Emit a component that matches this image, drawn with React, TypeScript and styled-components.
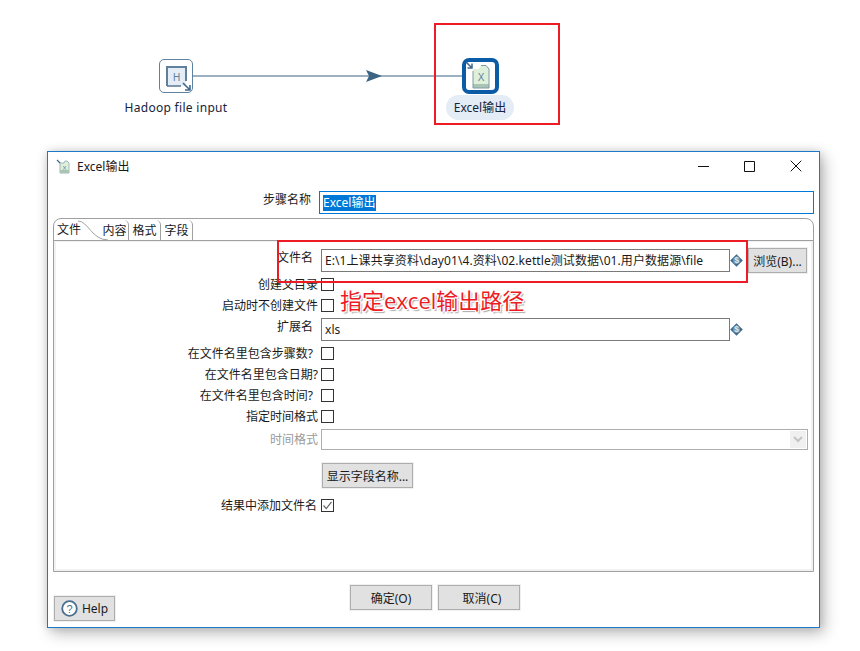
import React from "react";
import styled, { createGlobalStyle } from "styled-components";

const Global = createGlobalStyle`
  html, body { margin: 0; padding: 0; background: #fff; }
  body { font-family: "Noto Sans", "Noto Sans CJK SC", sans-serif; font-size: 12px; color: #1a1a1a; }
`;
const Page = styled.div`
  position: relative; width: 860px; height: 651px; overflow: hidden; background: #fff;
`;
const Canvas = styled.div`
  position: relative; height: 151px;
`;
const Wire = styled.svg`
  position: absolute; left: 190px; top: 66px;
`;
const NodeBox = styled.div<{ $active?: boolean }>`
  position: absolute; box-sizing: border-box; background: #fff; display: flex; align-items: center; justify-content: center;
  left: ${p => (p.$active ? 462 : 159)}px; top: ${p => (p.$active ? 58 : 59)}px;
  width: ${p => (p.$active ? 37 : 34)}px; height: ${p => (p.$active ? 36 : 34)}px;
  border: ${p => (p.$active ? "4px solid #0b5ca6" : "1px solid #5f81a0")};
  border-radius: ${p => (p.$active ? 7 : 5)}px;
`;
const NodeLabel = styled.div<{ $active?: boolean }>`
  position: absolute; color: #14233a; white-space: nowrap; text-align: center; box-sizing: border-box;
  font-size: 12px; line-height: 25px; height: 25px;
  left: ${p => (p.$active ? 446 : 116)}px; top: 95px;
  width: ${p => (p.$active ? 68 : 120)}px;
  letter-spacing: ${p => (p.$active ? 0 : 0.3)}px;
  background: ${p => (p.$active ? "#e4ecf5" : "transparent")};
  border-radius: 13px;
`;
const RedBox = styled.div<{ $x: number; $y: number; $w: number; $h: number }>`
  position: absolute; box-sizing: border-box; border: 2px solid #ed1c24; z-index: 5; pointer-events: none;
  left: ${p => p.$x}px; top: ${p => p.$y}px; width: ${p => p.$w}px; height: ${p => p.$h}px;
`;
const Note = styled.div`
  position: absolute; left: 340px; top: 284px; z-index: 5; color: #ed1c24; white-space: nowrap;
  font-family: "Open Sans", "Noto Sans CJK SC", sans-serif;
  font-size: 22px; line-height: 32px;
  text-shadow: 1px 1px 0 #fff, -1px -1px 0 #fff, 1px -1px 0 #fff, -1px 1px 0 #fff, 2px 2px 1px #a8a8a8;
`;
const Win = styled.div`
  margin-left: 47px; width: 773px; height: 477px; box-sizing: border-box; background: #fff;
  border: 1px solid #1c78c8; box-shadow: 4px 5px 14px rgba(0,0,0,.28), 0 0 8px rgba(0,0,0,.12);
  display: flex; flex-direction: column; padding: 0 5px;
`;
const TitleBar = styled.div`
  height: 28px; display: flex; align-items: center; margin-left: 3px; flex: none;
`;
const TitleText = styled.span`
  margin-left: 7px; font-size: 12px; color: #1a1a1a;
`;
const Controls = styled.div`
  margin-left: auto; display: flex; gap: 35px; margin-right: 12px; align-items: center;
`;
const NameRow = styled.div`
  height: 23px; margin-top: 11px; display: flex; flex: none;
`;
const NameLabel = styled.label`
  width: 258px; text-align: right; line-height: 18px; flex: none;
`;
const NameInput = styled.div`
  margin-left: 8px; flex: 1; box-sizing: border-box; border: 1px solid #0078d7; padding: 3px 0 0 3px; height: 23px;
`;
const Selected = styled.span`
  display: block; width: 53px; height: 16px; line-height: 16px; background: #0078d7; color: #fff; white-space: nowrap;
`;
const Folder = styled.div`
  margin-top: 4px; height: 354px; box-sizing: border-box; flex: none; border: 1px solid #a0a0a0; border-radius: 8px 8px 0 0;
  display: flex; flex-direction: column;
`;
const TabStrip = styled.div`
  position: relative; height: 21px; flex: none; display: flex; border-bottom: 1px solid #a0a0a0;
`;
const ActiveTab = styled.div`
  width: 47px; padding-left: 3px; line-height: 21px; box-sizing: border-box; flex: none;
`;
const Tab = styled.div<{ $w: number }>`
  width: ${p => p.$w}px; box-sizing: border-box; text-align: center; line-height: 21px; flex: none;
  border-right: 1px solid #a0a0a0; border-top-right-radius: 5px; margin-top: 1px; height: 20px;
`;
const Curve = styled.svg`
  position: absolute; left: 24px; top: 0;
`;
const Panel = styled.div`
  flex: 1; display: flex; flex-direction: column; border: 2px solid #f1f1f1; border-top-width: 1px;
`;
const Row = styled.div<{ $h: number; $mt: number }>`
  display: flex; align-items: center; height: ${p => p.$h}px; margin-top: ${p => p.$mt}px; flex: none;
`;
const LabelCell = styled.div`
  width: 262px; flex: none; display: flex; justify-content: flex-end;
`;
const Label = styled.label<{ $end?: number; $up?: number; $off?: boolean }>`
  white-space: nowrap; line-height: 16px;
  margin-right: ${p => p.$end ?? 0}px;
  transform: translateY(${p => -(p.$up ?? 0)}px);
  color: ${p => (p.$off ? "#9a9a9a" : "#1a1a1a")};
`;
const Field = styled.div`
  margin-left: 3px; width: 409px; height: 23px; box-sizing: border-box; border: 1px solid #7a7a7a; padding-left: 3px; line-height: 21px; letter-spacing: 0.08px; white-space: nowrap; overflow: hidden; flex: none; color: #1a1a1a;
`;
const VarIcon = styled.svg`
  flex: none;
`;
const Check = styled.span`
  margin-left: 3px; width: 13px; height: 13px; box-sizing: border-box; border: 1px solid #333; flex: none; display: flex; align-items: center; justify-content: center;
`;
const Combo = styled.div`
  margin-left: 3px; width: 487px; height: 21px; box-sizing: border-box; border: 1px solid #adadad; display: flex; justify-content: flex-end; padding: 1px; flex: none;
`;
const ComboBtn = styled.div`
  width: 16px; background: #f0f0f0; display: flex; align-items: center; justify-content: center;
`;
const Btn = styled.button<{ $w: number; $pl?: number; $ml?: number }>`
  width: ${p => p.$w}px; height: 25px; box-sizing: border-box; background: #e1e1e1; border: 1px solid #adadad; outline: 1px solid #f0f0f0;
  font: inherit; font-size: 12px; color: #1a1a1a; padding: 0 0 0 ${p => p.$pl ?? 0}px; margin-left: ${p => p.$ml ?? 0}px;
  flex: none; display: flex; align-items: center; justify-content: center; gap: 4px; white-space: nowrap;
`;
const Footer = styled.div`
  flex: 1; display: flex; align-items: flex-start;
`;
const HelpSlot = styled.div`
  margin-top: 24px; margin-left: 1px;
`;
const FooterCenter = styled.div`
  display: flex; gap: 6px; margin-left: 235px; margin-top: 13px;
`;

const Var = () => (
  <VarIcon width="13" height="13" viewBox="0 0 13 13">
    <path d="M6.5 0.2 12.8 6.5 6.5 12.8 0.2 6.5Z" fill="#3f6a8c" />
    <circle cx="6.5" cy="6.5" r="3.6" fill="#6f93ad" />
    <text x="6.5" y="9.4" fontSize="8.5" textAnchor="middle" fill="#dfe8ef" fontFamily="Liberation Sans, sans-serif" fontWeight="700">$</text>
  </VarIcon>
);
const CheckRow = ({ text, end, mt, checked }: { text: string; end?: number; mt: number; checked?: boolean }) => (
  <Row $h={13} $mt={mt}>
    <LabelCell><Label $end={end}>{text}</Label></LabelCell>
    <Check>
      {checked && (
        <svg width="11" height="11" viewBox="0 0 11 11"><path d="M1.5 5.5 4.3 8.6 9.5 1.8" fill="none" stroke="#666" strokeWidth="1.2" /></svg>
      )}
    </Check>
  </Row>
);

export default function App() {
  return (
    <Page>
      <Global />
      <Canvas>
        <Wire width="275" height="20" viewBox="0 0 275 20">
          <path d="M2 10H273" stroke="#3b6485" strokeWidth="1.2" />
          <path d="M176 4 192 10 176 16 179 10Z" fill="#3b6485" />
        </Wire>
        <NodeBox>
          <svg width="30" height="30" viewBox="0 0 30 30">
            <path d="M6 6H25V25H6Z" fill="#e4edf5" />
            <path d="M6 25V6H25V20" fill="none" stroke="#5f7f9b" strokeWidth="2" />
            <path d="M6 25H20" stroke="#5f7f9b" strokeWidth="1.6" />
            <text x="15.5" y="19.5" fontSize="10" textAnchor="middle" fill="#5f7f9b" fontFamily="Liberation Sans, sans-serif">H</text>
            <path d="M22 22 29 29M29 24V29H24" fill="none" stroke="#3f6a8c" strokeWidth="1.6" />
          </svg>
        </NodeBox>
        <NodeLabel>Hadoop file input</NodeLabel>
        <NodeBox $active>
          <svg width="29" height="28" viewBox="0 0 29 28">
            <path d="M7 7H13L15 3H20L23 7V26H7Z" fill="#dff0da" />
            <path d="M7 22H23V26H7Z" fill="#a9c4b4" />
            <path d="M7 9V26H23V7L20 3.5H15" fill="none" stroke="#7d9aa8" strokeWidth="1" />
            <text x="15" y="19" fontSize="10" textAnchor="middle" fill="#5f7f9b" fontFamily="Liberation Sans, sans-serif">X</text>
            <path d="M0 0 6 6M6 1.5V6H1.5" fill="none" stroke="#3f6a8c" strokeWidth="1.5" />
          </svg>
        </NodeBox>
        <NodeLabel $active>Excel输出</NodeLabel>
      </Canvas>
      <RedBox $x={434} $y={23} $w={126} $h={102} />
      <RedBox $x={277} $y={240} $w={471} $h={43} />
      <Note>指定excel输出路径</Note>
      <Win>
        <TitleBar>
          <svg width="14" height="15" viewBox="0 0 14 15">
            <path d="M4 4H8L9 2H11L13 4V14H4Z" fill="#dff0da" stroke="#8aa5ae" strokeWidth="0.8" />
            <path d="M4 11H13V14H4Z" fill="#a9c4b4" />
            <text x="8.5" y="10.5" fontSize="6" textAnchor="middle" fill="#5f7f9b" fontFamily="Liberation Sans, sans-serif">X</text>
            <path d="M1 1 4 4" stroke="#3f6a8c" strokeWidth="1.2" />
          </svg>
          <TitleText>Excel输出</TitleText>
          <Controls>
            <svg width="11" height="11" viewBox="0 0 11 11"><path d="M0 5.5H11" stroke="#111" strokeWidth="1" /></svg>
            <svg width="11" height="11" viewBox="0 0 11 11"><path d="M.5.5H10.5V10.5H.5Z" fill="none" stroke="#111" strokeWidth="1" /></svg>
            <svg width="12" height="12" viewBox="0 0 12 12"><path d="M.7.7 11.3 11.3M11.3.7.7 11.3" stroke="#111" strokeWidth="1" /></svg>
          </Controls>
        </TitleBar>
        <NameRow>
          <NameLabel>步骤名称</NameLabel>
          <NameInput><Selected>Excel输出</Selected></NameInput>
        </NameRow>
        <Folder>
          <TabStrip>
            <ActiveTab>文件</ActiveTab>
            <Tab $w={28}>内容</Tab>
            <Tab $w={32}>格式</Tab>
            <Tab $w={32}>字段</Tab>
            <Curve width="30" height="22" viewBox="0 0 30 22">
              <path d="M0 2C10 2 14 21 30 21" fill="none" stroke="#a0a0a0" strokeWidth="1" />
            </Curve>
          </TabStrip>
          <Panel>
            <Row $h={23} $mt={7}>
              <LabelCell><Label $end={5} $up={3}>文件名</Label></LabelCell>
              <Field>E:\1上课共享资料\day01\4.资料\02.kettle测试数据\01.用户数据源\file</Field>
              <Var />
              <Btn $w={59} $ml={5}>浏览(B)...</Btn>
            </Row>
            <CheckRow text="创建父目录" mt={6} />
            <CheckRow text="启动时不创建文件" mt={8} />
            <Row $h={23} $mt={6}>
              <LabelCell><Label $end={5} $up={3}>扩展名</Label></LabelCell>
              <Field>xls</Field>
              <Var />
            </Row>
            <CheckRow text="在文件名里包含步骤数?" end={5} mt={6} />
            <CheckRow text="在文件名里包含日期?" mt={8} />
            <CheckRow text="在文件名里包含时间?" end={5} mt={8} />
            <CheckRow text="指定时间格式" mt={8} />
            <Row $h={21} $mt={6}>
              <LabelCell><Label $off>时间格式</Label></LabelCell>
              <Combo>
                <ComboBtn>
                  <svg width="10" height="7" viewBox="0 0 10 7"><path d="M1 1 5 5 9 1" fill="none" stroke="#c4c4c4" strokeWidth="2" /></svg>
                </ComboBtn>
              </Combo>
            </Row>
            <Row $h={25} $mt={13}>
              <LabelCell />
              <Btn $w={91} $ml={4}>显示字段名称...</Btn>
            </Row>
            <CheckRow text="结果中添加文件名" end={1} mt={11} checked />
          </Panel>
        </Folder>
        <Footer>
          <HelpSlot>
            <Btn $w={61}>
              <svg width="17" height="17" viewBox="0 0 17 17">
                <circle cx="8.5" cy="8.5" r="7.3" fill="#fff" stroke="#4a6f8e" strokeWidth="1.8" />
                <text x="8.5" y="12.5" fontSize="11" textAnchor="middle" fill="#4a6f8e" fontFamily="Liberation Sans, sans-serif">?</text>
              </svg>
              Help
            </Btn>
          </HelpSlot>
          <FooterCenter>
            <Btn $w={82}>确定(O)</Btn>
            <Btn $w={82} $pl={6}>取消(C)</Btn>
          </FooterCenter>
        </Footer>
      </Win>
    </Page>
  );
}
